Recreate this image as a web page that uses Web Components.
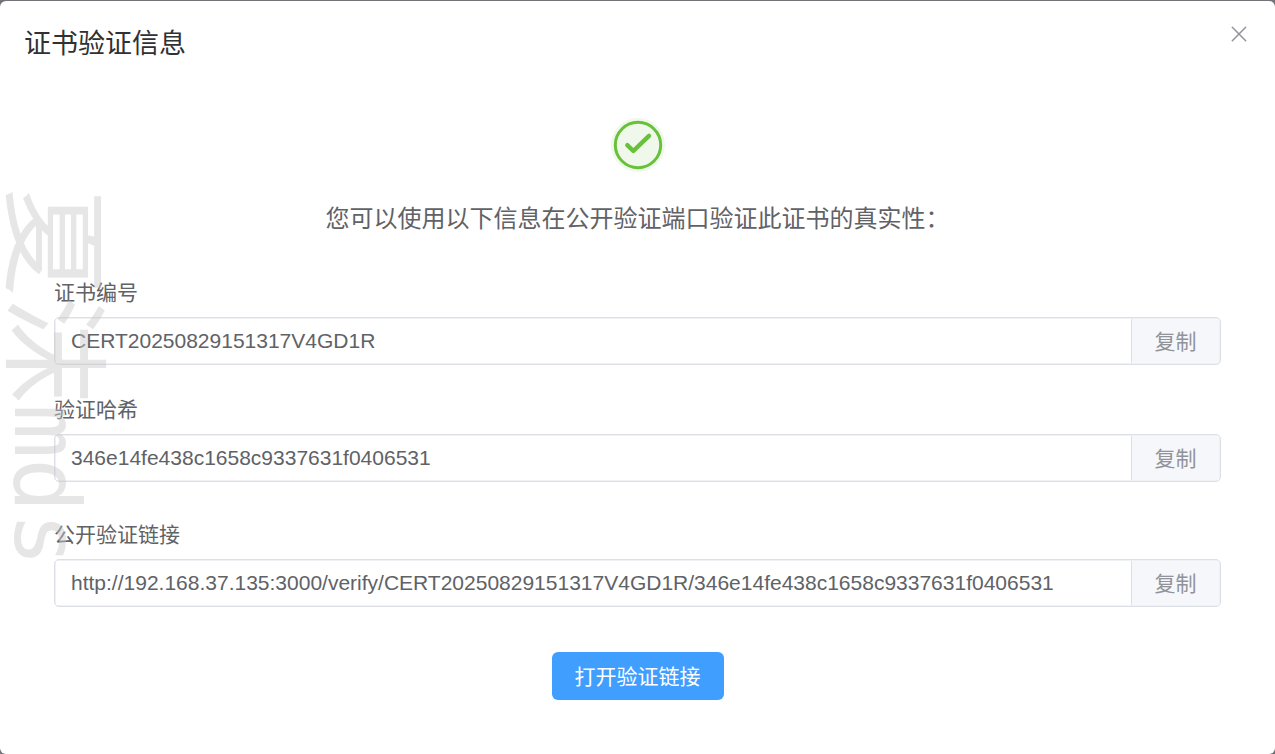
<!DOCTYPE html>
<html lang="zh-CN">
<head>
<meta charset="utf-8">
<title>证书验证信息</title>
<style>
html { background: #737477; }
body { margin: 0; padding-top: 1px; min-height: 100vh; box-sizing: border-box; display: flex; font-family: "Liberation Sans", "Noto Sans CJK SC", sans-serif; color: #606266; }
verify-dialog { flex: 1; }
</style>
</head>
<body>
<verify-dialog heading="证书验证信息">
  <success-mark></success-mark>
  <verify-hint>您可以使用以下信息在公开验证端口验证此证书的真实性：</verify-hint>
  <copy-field label="证书编号" value="CERT20250829151317V4GD1R"></copy-field>
  <copy-field label="验证哈希" value="346e14fe438c1658c9337631f0406531"></copy-field>
  <copy-field class="last" label="公开验证链接" value="http://192.168.37.135:3000/verify/CERT20250829151317V4GD1R/346e14fe438c1658c9337631f0406531"></copy-field>
  <primary-button>打开验证链接</primary-button>
</verify-dialog>
<page-watermark>夏沫<span slot="latin">mds</span></page-watermark>
<script>
const define = (name, html, setup) => {
  const template = document.createElement('template');
  template.innerHTML = html;
  customElements.define(name, class extends HTMLElement {
    connectedCallback() {
      if (this.shadowRoot) return;
      const root = this.attachShadow({ mode: 'open' });
      root.append(template.content.cloneNode(true));
      if (setup) setup(this, root);
    }
  });
};

define('verify-dialog', `
  <style>
    :host { display: block; background: #fff; border-radius: 6px; }
    header { display: flex; justify-content: space-between; align-items: flex-start; padding: 25px 24px 0; }
    h1 { margin: 0; font-size: 27px; line-height: 36px; font-weight: 400; color: #303133; }
    header button { border: 0; background: none; padding: 0; width: 24px; height: 24px; margin-top: -4px; color: #909399; }
    svg { display: block; }
    main { padding: 56px 54px 54px; }
    ::slotted(copy-field) { margin-bottom: 28px; }
    ::slotted(copy-field.last) { margin: 36px 0 45px; }
  </style>
  <header>
    <h1></h1>
    <button type="button" aria-label="关闭">
      <svg width="24" height="24" viewBox="0 0 24 24" fill="none" stroke="currentColor" stroke-width="1.5" stroke-linecap="round"><path d="M5.3 5.3 18.7 18.7M18.7 5.3 5.3 18.7"/></svg>
    </button>
  </header>
  <main><slot></slot></main>`,
  (el, root) => { root.querySelector('h1').textContent = el.getAttribute('heading'); });

define('success-mark', `
  <style>:host { display: flex; justify-content: center; } svg { display: block; }</style>
  <svg width="54" height="54" viewBox="0 0 54 54" fill="none" stroke="#67c23a">
    <circle cx="27" cy="27" r="27" fill="#f0f7eb" stroke="none"/>
    <circle cx="27" cy="27" r="22.7" stroke-width="3"/>
    <path d="M16.3 27.2 22.3 33 38 17.8" stroke-width="4.4" stroke-linecap="round" stroke-linejoin="round"/>
  </svg>`);

define('verify-hint', `
  <style>:host { display: block; text-align: center; font-size: 24px; line-height: 36px; margin: 29px 0 39px; }</style>
  <slot></slot>`);

define('copy-field', `
  <style>
    :host { display: block; }
    label { display: block; font-size: 21px; line-height: 33px; margin-bottom: 8px; }
    .row { display: flex; height: 48px; box-sizing: border-box; border: 1px solid #dcdfe6; padding: 1px; box-shadow: inset 0 0 0 1px #eff1f5; border-radius: 5px; overflow: hidden; }
    input { flex: 1; min-width: 0; border: 0; padding: 0 15px; background: #fff; font: 21px "Liberation Sans", sans-serif; color: #606266; outline: 0; }
    button { width: 88px; border: 0; border-left: 1px solid #dcdfe6; background: #f5f7fa; color: #909399; padding: 0 0 3px; font: 21px "Liberation Sans", "Noto Sans CJK SC", sans-serif; }
  </style>
  <label for="value"></label>
  <div class="row"><input id="value" type="text" readonly><button type="button">复制</button></div>`,
  (el, root) => {
    const input = root.querySelector('input');
    root.querySelector('label').textContent = el.getAttribute('label');
    input.value = el.getAttribute('value');
    root.querySelector('button').addEventListener('click', () => { input.select(); document.execCommand('copy'); });
  });

define('primary-button', `
  <style>
    :host { display: flex; justify-content: center; }
    button { height: 48px; padding: 0 23px 3px; border: 0; border-radius: 6px; background: #409eff; color: #fff; font: 21px "Liberation Sans", "Noto Sans CJK SC", sans-serif; }
  </style>
  <button type="button"><slot></slot></button>`);

define('page-watermark', `
  <style>
    :host { position: absolute; left: 0; top: 188px; writing-mode: vertical-rl; text-orientation: sideways; font: 108px/104px "Liberation Sans", "Noto Sans CJK SC", sans-serif; color: rgba(200, 200, 200, .45); white-space: nowrap; pointer-events: none; }
    ::slotted(span) { font: 90px/90px "DejaVu Sans Mono", monospace; }
  </style>
  <slot></slot><slot name="latin"></slot>`);
</script>
</body>
</html>
